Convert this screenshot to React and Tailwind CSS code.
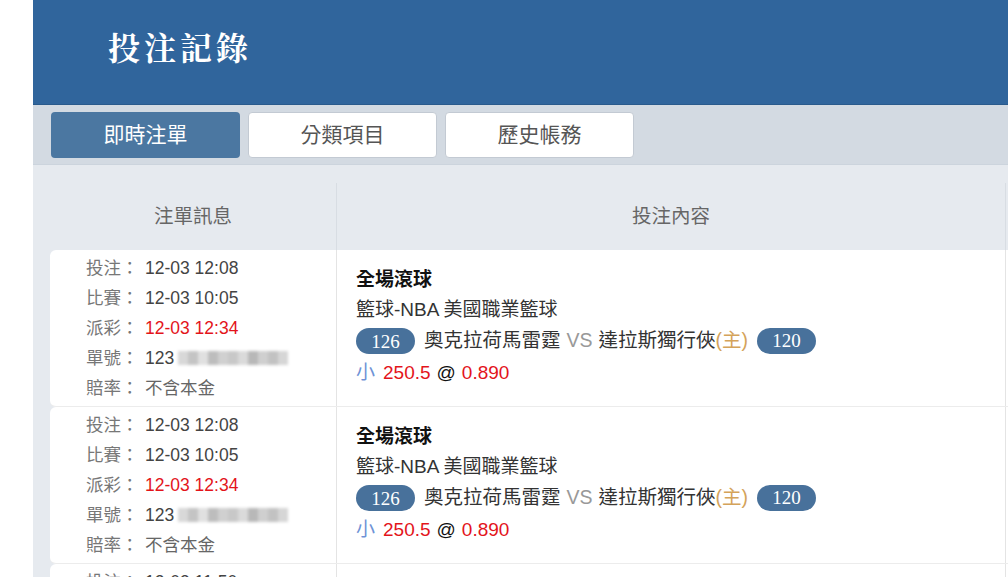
import React from 'react';

const font = { fontFamily: '"Liberation Sans", "Noto Sans CJK TC", sans-serif' };

const bets = [
  { placed: '12-03 12:08', match: '12-03 10:05', settle: '12-03 12:34', id: '123' },
  { placed: '12-03 12:08', match: '12-03 10:05', settle: '12-03 12:34', id: '123' },
  { placed: '12-03 11:50', match: '12-03 10:05', settle: '12-03 12:34', id: '123' },
];

// pixelated blocks standing in for the masked order number
const masked = ['#d8d8d8', '#c4c4c4', '#e0e0e0', '#bdbdbd', '#d0d0d0', '#c8c8c8', '#dadada', '#b8b8b8', '#cfcfcf', '#c2c2c2', '#d6d6d6'];

const Tab = ({ label, active }) => (
  <div
    className={
      active
        ? 'w-[189px] h-[46px] rounded-[4px] bg-[#4b77a1] text-white flex items-center justify-center text-[21px]'
        : 'w-[189px] h-[46px] rounded-[4px] bg-white border border-[#c3cad3] text-[#555] flex items-center justify-center text-[21px]'
    }
  >
    {label}
  </div>
);

const Pill = ({ n }) => (
  <span
    className="inline-flex items-center justify-center w-[59px] h-[26px] rounded-full bg-[#48719b] text-white text-[19px] leading-none"
    style={{ fontFamily: '"Liberation Serif", serif' }}
  >
    {n}
  </span>
);

const InfoLine = ({ label, children }) => (
  <div className="flex h-[30px] items-center">
    <span className="text-[#777] w-[59px]">{label}：</span>
    {children}
  </div>
);

const BetRow = ({ bet }) => (
  <div className="flex h-[157px] bg-white rounded-l-[6px] border-b border-[#ececec]">
    <div className="w-[287px] shrink-0 border-r border-[#e4e4e4] pl-[36px] flex flex-col justify-center text-[17.5px]">
      <InfoLine label="投注">
        <span className="text-[#444]">{bet.placed}</span>
      </InfoLine>
      <InfoLine label="比賽">
        <span className="text-[#444]">{bet.match}</span>
      </InfoLine>
      <InfoLine label="派彩">
        <span className="text-[#e3141b]">{bet.settle}</span>
      </InfoLine>
      <InfoLine label="單號">
        <span className="text-[#444]">{bet.id}</span>
        <span className="flex ml-[4px] h-[14px] blur-[1.5px]">
          {masked.map((c, i) => (
            <span key={i} className="w-[10px] h-full" style={{ backgroundColor: c }} />
          ))}
        </span>
      </InfoLine>
      <InfoLine label="賠率">
        <span className="text-[#666]">不含本金</span>
      </InfoLine>
    </div>
    <div className="w-[669px] shrink-0 border-r border-[#e4e4e4] pl-[19px] flex flex-col justify-center text-[19.5px] text-[#333]">
      <div className="h-[29px] flex items-center font-bold text-[#111] text-[19px]">全場滾球</div>
      <div className="h-[30px] flex items-center text-[19px]">籃球-NBA 美國職業籃球</div>
      <div className="h-[32px] flex items-center">
        <Pill n="126" />
        <span className="ml-[9px]">奧克拉荷馬雷霆</span>
        <span className="mx-[6px] text-[#999]">VS</span>
        <span>達拉斯獨行俠</span>
        <span className="text-[#d4a35a]">(主)</span>
        <span className="ml-[9px]"><Pill n="120" /></span>
      </div>
      <div className="h-[33px] flex items-center text-[19px]">
        <span className="text-[#6e93d6]">小</span>
        <span className="ml-[8px] text-[#e3141b]">250.5</span>
        <span className="ml-[6px] text-[#111]">@</span>
        <span className="ml-[6px] text-[#e3141b]">0.890</span>
      </div>
    </div>
    <div className="w-[200px] shrink-0" />
  </div>
);

export default function App() {
  return (
    <div className="flex w-[1008px] h-[577px] overflow-hidden bg-white" style={font}>
      <div className="w-[33px] shrink-0 bg-white" />
      <div className="flex-1 min-w-0 overflow-hidden bg-[#e6eaef]">
        <div className="h-[105px] bg-[#30659c] border-b border-[#295a8c] flex items-center pl-[75px]">
          <h1
            className="text-white text-[32px] font-bold tracking-[4px] leading-none -mt-[12px]"
            style={{ fontFamily: '"Noto Serif CJK TC", "Noto Sans CJK TC", serif' }}
          >
            投注記錄
          </h1>
        </div>
        <div className="h-[60px] bg-[#d3dae2] border-b border-[#ccd4dd] flex items-center gap-[8px] pl-[18px]">
          <Tab label="即時注單" active />
          <Tab label="分類項目" />
          <Tab label="歷史帳務" />
        </div>
        <div className="pt-[18px] pl-[17px]">
          <div className="w-[1200px]">
            <div className="flex h-[67px] text-[19.5px] text-[#666]">
              <div className="w-[287px] shrink-0 border-r border-[#d8dde3] flex items-center justify-center">注單訊息</div>
              <div className="w-[669px] shrink-0 border-r border-[#d8dde3] flex items-center justify-center">投注內容</div>
              <div className="w-[200px] shrink-0" />
            </div>
            {bets.map((b, i) => (
              <BetRow key={i} bet={b} />
            ))}
          </div>
        </div>
      </div>
    </div>
  );
}
